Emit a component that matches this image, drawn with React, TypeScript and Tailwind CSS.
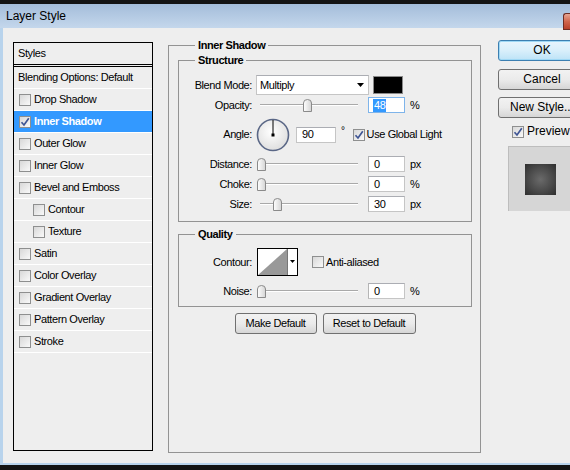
import React from "react";

const STYLE_ROWS = [
  { label: "Drop Shadow", indent: false, checked: false },
  { label: "Inner Shadow", indent: false, checked: true, selected: true },
  { label: "Outer Glow", indent: false, checked: false },
  { label: "Inner Glow", indent: false, checked: false },
  { label: "Bevel and Emboss", indent: false, checked: false },
  { label: "Contour", indent: true, checked: false },
  { label: "Texture", indent: true, checked: false },
  { label: "Satin", indent: false, checked: false },
  { label: "Color Overlay", indent: false, checked: false },
  { label: "Gradient Overlay", indent: false, checked: false },
  { label: "Pattern Overlay", indent: false, checked: false },
  { label: "Stroke", indent: false, checked: false },
];

function Checkbox({ checked = false }: { checked?: boolean }) {
  return (
    <span className="flex h-[12px] w-[12px] shrink-0 items-center justify-center border border-[#8e8f8f] bg-gradient-to-br from-[#d8d8d8] to-[#f9f9f9]">
      {checked && (
        <svg width="10" height="10" viewBox="0 0 10 10">
          <path d="M1.5 5.2 L4 8 L8.8 1.2" fill="none" stroke="#3f5594" strokeWidth="1.7" />
        </svg>
      )}
    </span>
  );
}

function Slider({ pos }: { pos: number }) {
  return (
    <div className="relative h-[14px] w-[98px] shrink-0">
      <div className="absolute left-0 right-0 top-[6px] h-[2px] border-t border-[#a9a9a9] border-b border-b-white" />
      <svg className="absolute top-[1px]" style={{ left: pos - 4 }} width="9" height="13" viewBox="0 0 9 13">
        <defs>
          <linearGradient id="thumb" x1="0" y1="0" x2="1" y2="0">
            <stop offset="0" stopColor="#ffffff" />
            <stop offset="1" stopColor="#d4d4d4" />
          </linearGradient>
        </defs>
        <path d="M0.5 4 Q0.5 0.5 4.5 0.5 Q8.5 0.5 8.5 4 L8.5 12.5 L0.5 12.5 Z" fill="url(#thumb)" stroke="#8a8a8a" />
      </svg>
    </div>
  );
}

function Field({ value, selected = false }: { value: string; selected?: boolean }) {
  return (
    <div
      className={
        "flex h-[16px] w-[37px] shrink-0 items-center border bg-white pl-[4px] " +
        (selected ? "border-[#7eb4ea]" : "border-[#c5c5c5] border-t-[#abadb3] border-l-[#b5b5b5]")
      }
    >
      <span className={selected ? "bg-[#3399ff] px-[1px] leading-[13px] text-white" : "px-[1px] leading-[13px]"}>{value}</span>
    </div>
  );
}

function Row({ label, h = 20, children }: { label: string; h?: number; children: React.ReactNode }) {
  return (
    <div className="flex items-center" style={{ height: h }}>
      <span className="w-[73px] shrink-0 text-right">{label}</span>
      {children}
    </div>
  );
}

function Button({ children, className = "" }: { children: React.ReactNode; className?: string }) {
  return (
    <div
      className={
        "flex h-[21px] items-center justify-center rounded-[3px] border border-[#707070] bg-gradient-to-b from-[#f2f2f2] via-[#ebebeb] to-[#d6d6d6] " +
        className
      }
    >
      {children}
    </div>
  );
}

export default function App() {
  return (
    <div className="h-[470px] w-[570px] overflow-hidden bg-[#141414] pt-[4px] font-['Liberation_Sans',Arial,sans-serif] text-[11px] leading-[13px] tracking-[-0.4px] text-black">
      {/* title bar */}
      <div className="flex h-[24px] items-center justify-between bg-gradient-to-b from-[#a4bdda] to-[#c4d7ec] pl-[6px]">
        <span className="text-[12px] tracking-normal text-black">Layer Style</span>
        <div className="mb-[-2px] h-[17px] w-[7px] self-end rounded-tl-[3px] border border-r-0 border-[#6e2c22] bg-gradient-to-b from-[#e7a592] via-[#d0654c] to-[#b8402a]" />
      </div>

      {/* body */}
      <div className="flex h-[437px] border-b-[2px] border-l-[3px] border-[#b8d3ec] bg-[#eeeeee] pl-[10px]">
        {/* styles list */}
        <div className="mt-[14px] flex h-[409px] w-[140px] shrink-0 flex-col border border-black">
          <div className="flex h-[22px] items-center border-b border-black pl-[4px]">Styles</div>
          <div className="mt-[1px] flex-1 border-t border-black">
            <div className="flex h-[22px] items-center border-b border-white pl-[4px]">Blending Options: Default</div>
            {STYLE_ROWS.map((r) => (
              <div
                key={r.label}
                className={
                  "flex h-[22px] items-center gap-[3px] border-b border-white " +
                  (r.indent ? "pl-[19px] " : "pl-[5px] ") +
                  (r.selected ? "bg-[#3399ff] font-bold text-white" : "")
                }
              >
                <Checkbox checked={r.checked} />
                <span>{r.label}</span>
              </div>
            ))}
          </div>
        </div>

        {/* settings */}
        <div className="ml-[15px] flex w-[313px] shrink-0 flex-col">
          <fieldset className="mt-[10px] h-[415px] border border-[#939393] pl-[9px] pr-[8px]">
            <legend className="ml-[17px] px-[3px] font-bold leading-[14px]">Inner Shadow</legend>

            <fieldset className="mt-[1px] border border-[#939393] pb-[7px]">
              <legend className="ml-[16px] px-[3px] font-bold leading-[14px]">Structure</legend>
              <div className="mt-[8px]">
                <Row label="Blend Mode:">
                  <div className="ml-[4px] flex h-[20px] w-[113px] items-center justify-between border border-[#c5c5c5] border-t-[#abadb3] bg-white pl-[3px] pr-[4px]">
                    <span>Multiply</span>
                    <svg width="7" height="4" viewBox="0 0 7 4">
                      <path d="M0 0 H7 L3.5 4 Z" fill="#000" />
                    </svg>
                  </div>
                  <div className="ml-[4px] h-[18px] w-[30px] border border-[#8a8a8a] bg-black" />
                </Row>
                <Row label="Opacity:">
                  <div className="ml-[8px]">
                    <Slider pos={47} />
                  </div>
                  <div className="ml-[10px]">
                    <Field value="48" selected />
                  </div>
                  <span className="ml-[5px]">%</span>
                </Row>
                <Row label="Angle:" h={39}>
                  <svg className="ml-[4px] shrink-0" width="34" height="34" viewBox="0 0 34 34">
                    <defs>
                      <radialGradient id="dial" cx="0.45" cy="0.4" r="0.65">
                        <stop offset="0" stopColor="#ffffff" />
                        <stop offset="1" stopColor="#dcdcdc" />
                      </radialGradient>
                    </defs>
                    <circle cx="17" cy="17" r="15.5" fill="url(#dial)" stroke="#5a6786" strokeWidth="1.6" />
                    <line x1="17" y1="17" x2="17" y2="2" stroke="#000" strokeWidth="1" />
                    <rect x="15.5" y="15.5" width="3" height="3" fill="#000" />
                  </svg>
                  <div className="ml-[6px] flex h-[16px] w-[40px] shrink-0 items-center border border-[#c5c5c5] border-t-[#abadb3] bg-white pl-[5px]">
                    90
                  </div>
                  <span className="ml-[5px] self-start pt-[9px] text-[10px]">°</span>
                  <div className="ml-[8px] flex items-center gap-[2px]">
                    <Checkbox checked />
                    <span>Use Global Light</span>
                  </div>
                </Row>
                <Row label="Distance:">
                  <div className="ml-[8px]">
                    <Slider pos={1} />
                  </div>
                  <div className="ml-[10px]">
                    <Field value="0" />
                  </div>
                  <span className="ml-[5px]">px</span>
                </Row>
                <Row label="Choke:">
                  <div className="ml-[8px]">
                    <Slider pos={1} />
                  </div>
                  <div className="ml-[10px]">
                    <Field value="0" />
                  </div>
                  <span className="ml-[5px]">%</span>
                </Row>
                <Row label="Size:">
                  <div className="ml-[8px]">
                    <Slider pos={17} />
                  </div>
                  <div className="ml-[10px]">
                    <Field value="30" />
                  </div>
                  <span className="ml-[5px]">px</span>
                </Row>
              </div>
            </fieldset>

            <fieldset className="mt-[5px] border border-[#939393] pb-[5px]">
              <legend className="ml-[16px] px-[3px] font-bold leading-[14px]">Quality</legend>
              <div className="mt-[7px]">
                <Row label="Contour:" h={28}>
                  <svg className="ml-[5px] shrink-0" width="41" height="28" viewBox="0 0 41 28">
                    <rect x="0.5" y="0.5" width="40" height="27" fill="#fff" stroke="#000" />
                    <path d="M1 27 L30 1 L30 27 Z" fill="#999" />
                    <line x1="30.5" y1="1" x2="30.5" y2="27" stroke="#777" />
                    <path d="M33 12 H38 L35.5 15 Z" fill="#000" />
                  </svg>
                  <div className="ml-[14px] flex items-center gap-[2px]">
                    <Checkbox />
                    <span>Anti-aliased</span>
                  </div>
                </Row>
                <div className="mt-[5px]">
                  <Row label="Noise:">
                    <div className="ml-[8px]">
                      <Slider pos={1} />
                    </div>
                    <div className="ml-[10px]">
                      <Field value="0" />
                    </div>
                    <span className="ml-[5px]">%</span>
                  </Row>
                </div>
              </div>
            </fieldset>

            <div className="mt-[6px] flex justify-center gap-[6px]">
              <Button className="w-[82px]">Make Default</Button>
              <Button className="w-[93px]">Reset to Default</Button>
            </div>
          </fieldset>
        </div>

        {/* right column */}
        <div className="ml-[17px] mt-[12px] flex w-[88px] shrink-0 flex-col tracking-normal">
          <div className="flex h-[21px] items-center justify-center rounded-[3px] border border-[#3c7fb1] bg-gradient-to-b from-[#e8f5fd] via-[#d9effb] to-[#bde3f7] text-[12px] shadow-[inset_0_0_0_1px_#9fd8f5]">
            OK
          </div>
          <Button className="mt-[8px] text-[12px]">Cancel</Button>
          <Button className="mt-[7px] text-[12px]">New Style...</Button>
          <div className="ml-[14px] mt-[7px] flex items-center gap-[3px] text-[12px]">
            <Checkbox checked />
            <span>Preview</span>
          </div>
          <div className="ml-[10px] mt-[8px] flex h-[65px] w-[64px] items-center justify-center border-l border-t border-[#bdbdbd] bg-[#d6d6d6]">
            <div className="h-[31px] w-[31px] bg-[radial-gradient(circle,#6a6a6a_0%,#4a4a4a_55%,#2e2e2e_100%)]" />
          </div>
        </div>
      </div>
    </div>
  );
}
